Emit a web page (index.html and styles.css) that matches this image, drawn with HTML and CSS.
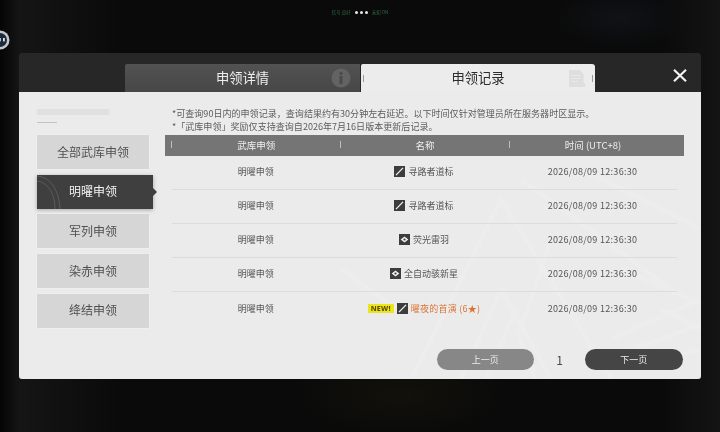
FILE: index.html
```html
<!DOCTYPE html>
<html lang="zh-CN">
<head>
<meta charset="utf-8">
<title>申领记录</title>
<link rel="stylesheet" href="styles.css">
</head>
<body>
<div class="screen">
  <div class="status">
    <span class="status-text">信号 良好</span>
    <span class="dots"><i></i><i></i><i></i></span>
    <span class="status-text">未知 ON</span>
  </div>
  <div class="float-ball"><svg width="20" height="20" viewBox="0 0 20 20"><circle cx="10" cy="10" r="9.500" fill="#c3c8ce"/><circle cx="10" cy="10" r="7" fill="#1d2a3c"/><rect x="9" y="8" width="1.800" height="3.400" fill="#dfe4ea"/><rect x="13" y="8" width="1.800" height="3.400" fill="#dfe4ea"/></svg></div>
  <main class="modal">
    <header class="modal-head">
      <div class="tab tab-off">
        <span>申领详情</span>
        <svg class="tab-icon info" width="20" height="20" viewBox="0 0 20 20"><circle cx="10" cy="10" r="9.500" fill="#636363"/><circle cx="10" cy="5.400" r="1.600" fill="#4a4a4a"/><rect x="8.500" y="8" width="3" height="8" fill="#4a4a4a"/></svg>
      </div>
      <div class="tab tab-on">
        <i class="tick tick-l"></i>
        <span>申领记录</span>
        <svg class="tab-icon doc" width="16" height="17" viewBox="0 0 16 17"><path d="M0 0h10.500l4 4v9h1.500v4H0z" fill="#dedede"/><path d="M2.500 5.500h9M2.500 8.500h9M2.500 11.500h6" stroke="#e8e8e8" stroke-width="1"/></svg>
        <i class="tick tick-r"></i>
      </div>
      <button class="close" aria-label="关闭"><svg width="14" height="13" viewBox="0 0 14 13"><path d="M1 .8 13 12.200M13 .8 1 12.200" stroke="#f2f2f2" stroke-width="2.200"/></svg></button>
    </header>
    <div class="modal-body">
      <svg class="watermark" width="420" height="240" viewBox="0 0 420 240" fill="none" stroke="#fff" stroke-width="5" opacity=".12"><path d="M130 240 220 60l110 180M180 240l40-90 50 90M240 40l150 110M300 30l120 60M380 170l40 20M60 130l70 50M270 100l-30 90M205 240l30-70M255 240l-20-50M340 130l80 35M330 200l90-40M340 215l80-30M350 230l70-20"/></svg>
      <aside class="side">
        <div class="brand"><b></b><s></s></div>
        <nav class="side-nav">
          <a class="side-item">全部武库申领</a>
          <a class="side-item active">明曜申领<svg class="swirl" width="26" height="34" viewBox="0 0 26 34" fill="none" stroke="#6a6a6a" stroke-width=".7"><path d="M0 1c12 1 22 12 23 33M0 6c9 1 18 10 18 28"/></svg></a>
          <a class="side-item">军列申领</a>
          <a class="side-item">染赤申领</a>
          <a class="side-item">绛结申领</a>
        </nav>
      </aside>
      <section class="content">
        <div class="notes">
          <p>*可查询90日内的申领记录，查询结果约有30分钟左右延迟。以下时间仅针对管理员所在服务器时区显示。</p>
          <p>*「武库申领」奖励仅支持查询自2026年7月16日版本更新后记录。</p>
        </div>
        <div class="thead">
          <div>武库申领</div><div>名称</div><div>时间 (UTC+8)</div>
        </div>
        <div class="rows">
          <div class="row"><div>明曜申领</div><div class="name"><svg class="ic" viewBox="0 0 10 10"><rect width="10" height="10" fill="#3d3d3d"/><path d="M1.800 8.300 8.200 1.700" stroke="#f2f2f2" stroke-width="1.200"/></svg>寻路者道标</div><div class="time">2026/08/09 12:36:30</div></div>
          <div class="row"><div>明曜申领</div><div class="name"><svg class="ic" viewBox="0 0 10 10"><rect width="10" height="10" fill="#3d3d3d"/><path d="M1.800 8.300 8.200 1.700" stroke="#f2f2f2" stroke-width="1.200"/></svg>寻路者道标</div><div class="time">2026/08/09 12:36:30</div></div>
          <div class="row"><div>明曜申领</div><div class="name"><svg class="ic" viewBox="0 0 10 10"><rect width="10" height="10" fill="#3d3d3d"/><path d="M1.500 5 5 2.300 8.500 5 5 7.700z" fill="#f2f2f2"/><circle cx="5" cy="5" r="1" fill="#3d3d3d"/></svg>荧光雷羽</div><div class="time">2026/08/09 12:36:30</div></div>
          <div class="row"><div>明曜申领</div><div class="name"><svg class="ic" viewBox="0 0 10 10"><rect width="10" height="10" fill="#3d3d3d"/><path d="M1.500 5 5 2.300 8.500 5 5 7.700z" fill="#f2f2f2"/><circle cx="5" cy="5" r="1" fill="#3d3d3d"/></svg>全自动骇新星</div><div class="time">2026/08/09 12:36:30</div></div>
          <div class="row last"><div>明曜申领</div><div class="name hot"><span class="new">NEW!</span><svg class="ic" viewBox="0 0 10 10"><rect width="10" height="10" fill="#3d3d3d"/><path d="M1.800 8.300 8.200 1.700" stroke="#f2f2f2" stroke-width="1.200"/></svg>曜夜的首演 (6★)</div><div class="time">2026/08/09 12:36:30</div></div>
        </div>
        <div class="pager">
          <button class="pg pg-off">上一页</button>
          <span class="pg-num">1</span>
          <button class="pg pg-on">下一页</button>
        </div>
      </section>
    </div>
  </main>
</div>
</body>
</html>
```
FILE: styles.css
```css
* { box-sizing: border-box; }
html, body { margin: 0; padding: 0; background: #050505; }
body { width: 720px; height: 432px; overflow: hidden; font-family: "Noto Sans CJK SC", "Noto Sans", sans-serif; }
.screen {
  position: relative; width: 720px; height: 432px; overflow: hidden; padding: 9px 0 0 19px;
  background:
    radial-gradient(ellipse 70px 30px at 620px 18px, #101216 0, rgba(16,18,22,0) 100%),
    radial-gradient(ellipse 110px 40px at 400px 395px, #12110a 0, rgba(18,17,10,0) 100%),
    linear-gradient(90deg, #050505 0, #151515 19px, #0a0a0a 120px, #0a0a0a 660px, #141414 720px);
  filter: blur(.35px);
}
.status { display: flex; align-items: center; justify-content: center; gap: 4px; width: 682px; height: 7px; margin-bottom: 37px; }
.status-text { font-size: 4.500px; line-height: 7px; color: #2f6a48; }
.dots { display: flex; gap: 2px; }
.dots i { width: 3px; height: 3px; border-radius: 50%; background: #e8e8e8; }
.float-ball { position: absolute; left: -10px; top: 30px; width: 20px; height: 20px; }
.float-ball svg { display: block; }

.modal { width: 682px; height: 326px; border-radius: 3px 3px 0 0; background: #272727; }
.modal-head { display: flex; align-items: flex-end; height: 39px; padding-left: 106px; }
.tab { position: relative; display: flex; align-items: center; justify-content: center; width: 235px; height: 28px; padding-bottom: 2px; font-size: 13.300px; }
.tab-off { background: linear-gradient(#525252, #474747); color: #eee; border-radius: 2px 0 0 0; }
.tab-on { margin-left: 1px; width: 234px; background: #ececec; color: #2c2c2c; border-radius: 2px 3px 0 0; }
.tab-icon { position: absolute; top: 4px; }
.info { right: 9px; }
.doc { right: 10px; top: 6px; }
.tick { position: absolute; top: 11px; width: 1px; height: 7px; background: #999; }
.tick-l { left: 2px; }
.tick-r { right: 2px; }
.close { display: flex; align-self: center; margin: 6px 0 0 78px; padding: 0; border: 0; background: none; }

.modal-body { position: relative; display: flex; height: 287px; padding-left: 18px; overflow: hidden; background: #ebebeb; border-radius: 0 0 3px 3px; }
.watermark { position: absolute; right: 0; bottom: 0; filter: blur(1px); }
.side { position: relative; flex: none; width: 127.500px; }
.brand { height: 43px; padding-top: 17px; }
.brand b { display: block; width: 72px; height: 6px; background: #e0e0e0; }
.brand s { display: block; width: 20px; height: 1px; margin-top: 7px; background: #c4c4c4; }
.side-nav { display: flex; flex-direction: column; gap: 5.700px; }
.side-item { position: relative; display: flex; align-items: center; justify-content: center; width: 112px; height: 34px; padding-bottom: 2px; font-size: 12px; color: #505050; background: #d6d6d6; box-shadow: 0 0 2px rgba(255,255,255,.6); }
.side-item.active { width: 116px; padding-right: 4px; color: #f2f2f2; background: #3f3f3f; box-shadow: 0 1px 4px rgba(0,0,0,.3); }
.side-item.active::after { content: ""; position: absolute; right: -4px; top: 13px; border-left: 4px solid #3f3f3f; border-top: 4px solid transparent; border-bottom: 4px solid transparent; }
.swirl { position: absolute; left: 0; top: 0; }

.content { position: relative; flex: 1; min-width: 0; padding-right: 17px; }
.notes { height: 43px; padding: 15px 0 0 7.500px; font-size: 9.050px; line-height: 13px; color: #5c5c5c; }
.notes p { margin: 0; white-space: nowrap; }
.thead { display: grid; grid-template-columns: 168.500px 169px 1fr; height: 21px; padding: 0 7.500px 1px 7.500px; align-items: center; text-align: center; font-size: 9.500px; color: #efefef; background: #757575; }
.thead div { position: relative; }
.thead div::before { content: ""; position: absolute; left: -1px; top: 3px; width: 1px; height: 7px; background: #bdbdbd; }
.rows { margin: 0 7.500px; }
.row { display: grid; grid-template-columns: 167.500px 169px 1fr; align-items: center; height: 34px; padding-bottom: 2px; border-bottom: 1px solid #dcdcdc; text-align: center; font-size: 9px; color: #555; }
.row.last { border-bottom: 0; }
.row > div { display: flex; align-items: center; justify-content: center; }
.ic { width: 11px; height: 11px; margin-right: 3px; flex: none; }
.hot { color: #dd7333; letter-spacing: .25px; }
.new { margin-right: 3px; padding: 0 3px; height: 9px; line-height: 9px; font-size: 7.200px; font-weight: 800; letter-spacing: .2px; color: #5a4f00; background: #eee41c; font-family: "Noto Sans", sans-serif; }
.time { letter-spacing: .3px; }
.pager { position: absolute; left: 272px; top: 257px; display: flex; align-items: center; }
.pg { width: 97.500px; height: 21px; padding: 0; border: 0; border-radius: 11px; font: 9px "Noto Sans CJK SC", sans-serif; color: #eee; }
.pg-off { background: #878787; }
.pg-on { background: #454545; }
.pg-num { width: 51px; text-align: center; font-size: 12px; color: #4c4c4c; }
```
